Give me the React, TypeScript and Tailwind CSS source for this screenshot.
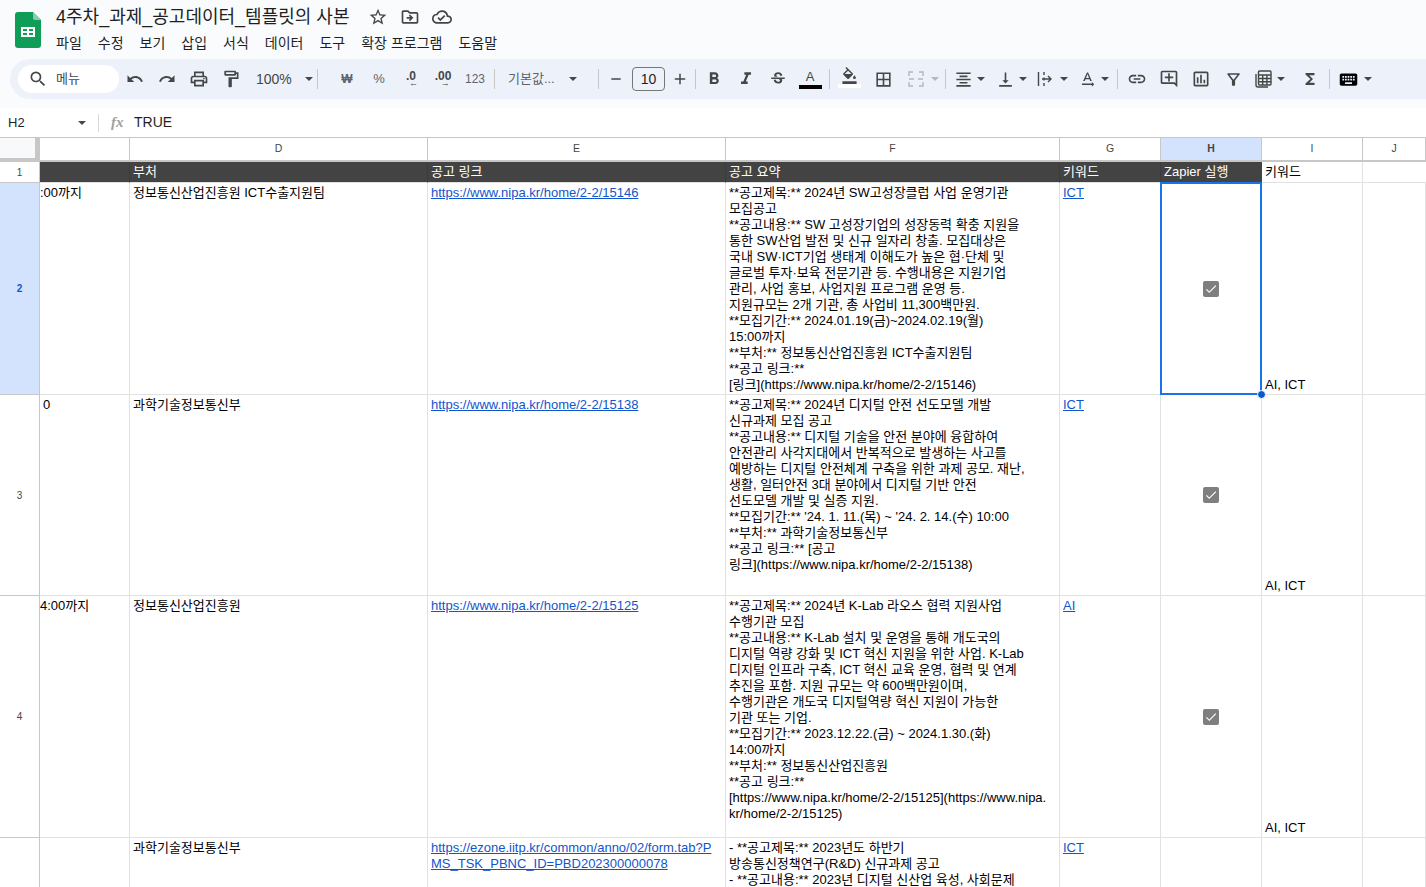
import type { ReactNode } from "react"
import {
  MdSearch, MdUndo, MdRedo, MdOutlinePrint, MdOutlineFormatPaint, MdFormatBold, MdFormatItalic,
  MdStrikethroughS, MdBorderAll, MdFormatAlignCenter, MdVerticalAlignBottom, MdLink,
  MdOutlineAddComment, MdOutlineInsertChart, MdOutlineFilterAlt, MdFunctions, MdKeyboard,
  MdStarBorder, MdOutlineDriveFileMove, MdOutlineCloudDone, MdAdd, MdRemove, MdOutlineFormatColorFill,
  MdTextRotationNone, MdCheck,
} from "react-icons/md"

const font = "font-['Liberation_Sans','Noto_Sans_CJK_KR',sans-serif]"

function Caret({ className = "" }: { className?: string }) {
  return <span className={"block w-0 h-0 border-x-[4px] border-x-transparent border-t-[4px] border-t-[#444746] " + className} />
}

function Tool({ children, w = "w-[32px]" }: { children: ReactNode; w?: string }) {
  return <div className={"flex items-center justify-center h-[28px] shrink-0 text-[#444746] " + w}>{children}</div>
}

function Sep({ m = "mx-[4px]" }: { m?: string }) {
  return <div className={"w-px h-[20px] bg-[#c7c7c7] shrink-0 " + m} />
}

function SheetsLogo() {
  return (
    <svg width="26" height="36" viewBox="0 0 26 36">
      <path d="M3 0h15l8 8v25a3 3 0 0 1-3 3H3a3 3 0 0 1-3-3V3a3 3 0 0 1 3-3z" fill="#0f9d58" />
      <path d="M18 0l8 8h-6a2 2 0 0 1-2-2z" fill="#87ceac" />
      <path d="M6 15h14v10H6z" fill="#fff" />
      <path d="M8 17h4v2H8zM14 17h4v2h-4zM8 21h4v2H8zM14 21h4v2h-4z" fill="#0f9d58" />
    </svg>
  )
}

function TopBar() {
  const menu = ["파일", "수정", "보기", "삽입", "서식", "데이터", "도구", "확장 프로그램", "도움말"]
  return (
    <div className="flex h-[59px] bg-[#f9fbfd]">
      <div className="w-[56px] shrink-0 pl-[15px] pt-[12px]">
        <SheetsLogo />
      </div>
      <div className="pt-[4px]">
        <div className="flex items-center h-[26px]">
          <span className="text-[18px] leading-[24px] text-[#1f1f1f]">4주차_과제_공고데이터_템플릿의 사본</span>
          <div className="flex items-center gap-[12px] ml-[19px] text-[#444746]">
            <MdStarBorder size={20} />
            <MdOutlineDriveFileMove size={20} />
            <MdOutlineCloudDone size={20} />
          </div>
        </div>
        <div className="flex gap-[16px] mt-[3px] text-[14px] leading-[20px] text-[#1f1f1f]">
          {menu.map((m) => (
            <span key={m} className="whitespace-nowrap">{m}</span>
          ))}
        </div>
      </div>
    </div>
  )
}

function Toolbar() {
  return (
    <div className="bg-[#f9fbfd] h-[49px] pl-[10px]">
      <div className="flex items-center h-[40px] pl-[8px] bg-[#edf2fa] rounded-l-[20px] text-[#444746] overflow-hidden">
        <div className="flex items-center w-[101px] h-[28px] shrink-0 rounded-full bg-white pl-[10px] text-[#444746]">
          <MdSearch size={20} />
          <span className="ml-[8px] text-[13px]">메뉴</span>
        </div>
        <Tool><MdUndo size={18} /></Tool>
        <Tool><MdRedo size={18} /></Tool>
        <Tool><MdOutlinePrint size={20} /></Tool>
        <Tool><MdOutlineFormatPaint size={20} /></Tool>
        <div className="flex items-center w-[70px] shrink-0 pl-[9px] text-[14px] text-[#444746]">
          100%<Caret className="ml-[13px]" />
        </div>
        <Sep m="ml-0 mr-[13px]" />
        <Tool><span className="text-[12px] font-bold text-[#5f6368]">₩</span></Tool>
        <Tool><span className="text-[13px] text-[#5f6368]">%</span></Tool>
        <Tool>
          <span className="relative text-[12px] font-bold leading-none pb-[6px]">.0<span className="absolute left-[3px] top-[9px] text-[9px]">←</span></span>
        </Tool>
        <Tool>
          <span className="relative text-[12px] font-bold leading-none pb-[6px]">.00<span className="absolute left-[6px] top-[9px] text-[9px]">→</span></span>
        </Tool>
        <Tool><span className="text-[12px] text-[#5f6368]">123</span></Tool>
        <Sep m="ml-[3px] mr-[13px]" />
        <div className="flex items-center w-[90px] shrink-0 text-[13px] text-[#5f6368]">
          기본값...<Caret className="ml-[14px]" />
        </div>
        <Sep m="ml-0 mr-[1px]" />
        <Tool><MdRemove size={16} /></Tool>
        <div className="flex items-center justify-center w-[33px] h-[24px] shrink-0 border border-[#747775] rounded-[4px] text-[14px] text-[#1f1f1f]">10</div>
        <Tool w="w-[30px]"><MdAdd size={18} /></Tool>
        <Sep m="ml-0 mr-[2px]" />
        <Tool><MdFormatBold size={20} /></Tool>
        <Tool><MdFormatItalic size={20} /></Tool>
        <Tool><MdStrikethroughS size={18} /></Tool>
        <Tool>
          <div className="flex flex-col items-center">
            <span className="text-[13px] leading-[13px] text-[#444746]">A</span>
            <span className="block w-[23px] h-[4px] mt-[2px] bg-black" />
          </div>
        </Tool>
        <Sep m="mx-[3px]" />
        <Tool>
          <div className="flex flex-col items-center -mt-[3px]">
            <MdOutlineFormatColorFill size={17} />
            <span className="block w-[23px] h-[4px] bg-white" />
          </div>
        </Tool>
        <Tool w="w-[36px]"><MdBorderAll size={19} /></Tool>
        <Tool w="w-[30px]">
          <svg width="16" height="16" viewBox="0 0 16 16" fill="none" stroke="#b4b7bb" strokeWidth="1.4">
            <path d="M1 5V1h4M1 11v4h4M15 5V1h-4M15 11v4h-4M1 8h5M15 8h-5" />
          </svg>
        </Tool>
        <Caret className="border-t-[#b4b7bb] ml-0 mr-[5px]" />
        <Sep m="ml-[1px] mr-[3px]" />
        <Tool w="w-[28px]"><MdFormatAlignCenter size={19} /></Tool>
        <Caret className="mr-[8px]" />
        <Tool w="w-[24px]"><MdVerticalAlignBottom size={19} /></Tool>
        <Caret className="ml-[2px] mr-[6px]" />
        <Tool w="w-[24px]">
          <svg width="16" height="16" viewBox="0 0 16 16" fill="none" stroke="#444746" strokeWidth="1.4">
            <path d="M1.5 1v14M7 1v3M7 6.5v3M7 12v3M5 8h8.5M11 5l3 3-3 3" />
          </svg>
        </Tool>
        <Caret className="ml-[3px] mr-[7px]" />
        <Tool w="w-[24px]"><MdTextRotationNone size={19} /></Tool>
        <Caret className="ml-[2px] mr-[8px]" />
        <Sep m="ml-0 mr-[3px]" />
        <Tool><MdLink size={20} /></Tool>
        <Tool><MdOutlineAddComment size={20} /></Tool>
        <Tool><MdOutlineInsertChart size={20} /></Tool>
        <Tool><MdOutlineFilterAlt size={19} /></Tool>
        <Tool w="w-[28px]">
          <svg width="18" height="18" viewBox="0 0 18 18" fill="none" stroke="#444746" strokeWidth="1.4">
            <path d="M2 4v11a2 2 0 0 0 2 2h10" />
            <rect x="4.5" y="1" width="12.5" height="14" rx="1" />
            <path d="M4.5 5h12.5M4.5 8.5h12.5M4.5 11.8h12.5M8.7 5v10M12.9 5v10" />
          </svg>
        </Tool>
        <Caret className="mr-[9px]" />
        <Tool w="w-[32px]"><MdFunctions size={18} /></Tool>
        <Sep m="ml-[3px] mr-[5px]" />
        <Tool w="w-[26px]"><MdKeyboard size={21} className="text-black" /></Tool>
        <Caret className="ml-[3px]" />
      </div>
    </div>
  )
}

function FormulaBar() {
  return (
    <div className="flex items-center h-[29px] bg-white text-[13.5px] text-[#1f1f1f]">
      <span className="w-[78px] pl-[8px] text-[13px] shrink-0">H2</span>
      <Caret className="shrink-0" />
      <div className="w-px h-[18px] bg-[#d9d9d9] ml-[12px] shrink-0" />
      <span className="w-[31px] ml-[12px] italic font-['Liberation_Serif',serif] font-bold text-[15px] text-[#a0a0a0] shrink-0">fx</span>
      <span className="text-[14px] -ml-[8px]">TRUE</span>
    </div>
  )
}

function Lines({ lines }: { lines: string[] }) {
  return (
    <>
      {lines.map((l, i) => (
        <div key={i} className="whitespace-nowrap">{l}</div>
      ))}
    </>
  )
}

function Cell({ children, bottom, className = "" }: { children?: ReactNode; bottom?: boolean; className?: string }) {
  return (
    <div className={"relative border-r border-b border-[#e1e1e1] px-[3px] overflow-hidden text-[13px] leading-[16px] text-black " + (bottom ? "flex flex-col justify-end pb-[1px] " : "pt-[2px] ") + className}>
      {children}
    </div>
  )
}

function A({ children }: { children: ReactNode }) {
  return <span className="text-[#1155cc] underline">{children}</span>
}

function Check() {
  return (
    <div className="absolute inset-0 flex items-center justify-center">
      <div className="flex items-center justify-center w-[16px] h-[16px] rounded-[2px] bg-[#7f7f7f]">
        <MdCheck size={14} className="text-white" />
      </div>
    </div>
  )
}

function ColHead({ children, active }: { children?: ReactNode; active?: boolean }) {
  return (
    <div className={"flex items-center justify-center border-r border-b-[2px] border-[#c7c7c7] text-[10.5px] text-[#444746] " + (active ? "bg-[#d3e3fd] font-bold text-[#0b57d0]" : "bg-white")}>
      {children}
    </div>
  )
}

function RowHead({ n, active }: { n: number; active?: boolean }) {
  return (
    <div className={"flex items-center justify-center border-r border-b border-[#c7c7c7] text-[10px] " + (active ? "bg-[#d3e3fd] font-bold text-[#0b57d0]" : "bg-white text-[#444746]")}>
      {n}
    </div>
  )
}

function Dark({ children, last }: { children?: ReactNode; last?: boolean }) {
  return (
    <div className={"flex items-center px-[3px] bg-[#434343] border-b border-[#e1e1e1] text-[13px] text-white whitespace-nowrap " + (last ? "" : "border-r border-r-[#3c3c3c]")}>
      {children}
    </div>
  )
}

const f2 = [
  "**공고제목:** 2024년 SW고성장클럽 사업 운영기관",
  "모집공고",
  "**공고내용:** SW 고성장기업의 성장동력 확충 지원을",
  "통한 SW산업 발전 및 신규 일자리 창출. 모집대상은",
  "국내 SW·ICT기업 생태계 이해도가 높은 협·단체 및",
  "글로벌 투자·보육 전문기관 등. 수행내용은 지원기업",
  "관리, 사업 홍보, 사업지원 프로그램 운영 등.",
  "지원규모는 2개 기관, 총 사업비 11,300백만원.",
  "**모집기간:** 2024.01.19(금)~2024.02.19(월)",
  "15:00까지",
  "**부처:** 정보통신산업진흥원 ICT수출지원팀",
  "**공고 링크:**",
  "[링크](https://www.nipa.kr/home/2-2/15146)",
]
const f3 = [
  "**공고제목:** 2024년 디지털 안전 선도모델 개발",
  "신규과제 모집 공고",
  "**공고내용:** 디지털 기술을 안전 분야에 융합하여",
  "안전관리 사각지대에서 반복적으로 발생하는 사고를",
  "예방하는 디지털 안전체계 구축을 위한 과제 공모. 재난,",
  "생활, 일터안전 3대 분야에서 디지털 기반 안전",
  "선도모델 개발 및 실증 지원.",
  "**모집기간:** '24. 1. 11.(목) ~ '24. 2. 14.(수) 10:00",
  "**부처:** 과학기술정보통신부",
  "**공고 링크:** [공고",
  "링크](https://www.nipa.kr/home/2-2/15138)",
]
const f4 = [
  "**공고제목:** 2024년 K-Lab 라오스 협력 지원사업",
  "수행기관 모집",
  "**공고내용:** K-Lab 설치 및 운영을 통해 개도국의",
  "디지털 역량 강화 및 ICT 혁신 지원을 위한 사업. K-Lab",
  "디지털 인프라 구축, ICT 혁신 교육 운영, 협력 및 연계",
  "추진을 포함. 지원 규모는 약 600백만원이며,",
  "수행기관은 개도국 디지털역량 혁신 지원이 가능한",
  "기관 또는 기업.",
  "**모집기간:** 2023.12.22.(금) ~ 2024.1.30.(화)",
  "14:00까지",
  "**부처:** 정보통신산업진흥원",
  "**공고 링크:**",
  "[https://www.nipa.kr/home/2-2/15125](https://www.nipa.",
  "kr/home/2-2/15125)",
]
const f5 = [
  "- **공고제목:** 2023년도 하반기",
  "방송통신정책연구(R&D) 신규과제 공고",
  "- **공고내용:** 2023년 디지털 신산업 육성, 사회문제",
]

function Sheet() {
  return (
    <div className="grid grid-cols-[40px_90px_298px_298px_334px_101px_101px_101px_63px] grid-rows-[24px_21px_212px_201px_242px_60px] border-t border-[#c7c7c7]">
      {/* column letters */}
      <div className="bg-[#f8f9fa] border-r-[5px] border-b-[4px] border-[#c7c7c7]" />
      <ColHead />
      <ColHead>D</ColHead>
      <ColHead>E</ColHead>
      <ColHead>F</ColHead>
      <ColHead>G</ColHead>
      <ColHead active>H</ColHead>
      <ColHead>I</ColHead>
      <ColHead>J</ColHead>

      {/* header row */}
      <RowHead n={1} />
      <Dark />
      <Dark>부처</Dark>
      <Dark>공고 링크</Dark>
      <Dark>공고 요약</Dark>
      <Dark>키워드</Dark>
      <Dark last>Zapier 실행</Dark>
      <div className="flex items-center px-[3px] border-r border-b border-[#e1e1e1] text-[13px] text-black">키워드</div>
      <div className="border-b border-[#e1e1e1]" />

      {/* row 2 */}
      <RowHead n={2} active />
      <Cell className="!px-0">:00까지</Cell>
      <Cell>정보통신산업진흥원 ICT수출지원팀</Cell>
      <Cell><A>https://www.nipa.kr/home/2-2/15146</A></Cell>
      <Cell><Lines lines={f2} /></Cell>
      <Cell><A>ICT</A></Cell>
      <div className="relative border-r border-b border-[#e1e1e1]">
        <Check />
        <div className="absolute -left-px -top-px -right-px -bottom-px border-2 border-[#1a73e8] pointer-events-none" />
        <div className="absolute -right-[5px] -bottom-[5px] z-10 w-[9px] h-[9px] rounded-full bg-[#0b57d0] border border-white" />
      </div>
      <Cell bottom>AI, ICT</Cell>
      <Cell />

      {/* row 3 */}
      <RowHead n={3} />
      <Cell>0</Cell>
      <Cell>과학기술정보통신부</Cell>
      <Cell><A>https://www.nipa.kr/home/2-2/15138</A></Cell>
      <Cell><Lines lines={f3} /></Cell>
      <Cell><A>ICT</A></Cell>
      <div className="relative border-r border-b border-[#e1e1e1]"><Check /></div>
      <Cell bottom>AI, ICT</Cell>
      <Cell />

      {/* row 4 */}
      <RowHead n={4} />
      <Cell className="!px-0">4:00까지</Cell>
      <Cell>정보통신산업진흥원</Cell>
      <Cell><A>https://www.nipa.kr/home/2-2/15125</A></Cell>
      <Cell><Lines lines={f4} /></Cell>
      <Cell><A>AI</A></Cell>
      <div className="relative border-r border-b border-[#e1e1e1]"><Check /></div>
      <Cell bottom>AI, ICT</Cell>
      <Cell />

      {/* row 5 */}
      <div className="border-r border-[#c7c7c7] bg-white" />
      <Cell />
      <Cell>과학기술정보통신부</Cell>
      <Cell>
        <div><A>https://ezone.iitp.kr/common/anno/02/form.tab?P</A></div>
        <div><A>MS_TSK_PBNC_ID=PBD202300000078</A></div>
      </Cell>
      <Cell><Lines lines={f5} /></Cell>
      <Cell><A>ICT</A></Cell>
      <Cell />
      <Cell />
      <Cell />
    </div>
  )
}

export default function App() {
  return (
    <div className={"w-[1426px] h-[887px] overflow-hidden bg-white " + font}>
      <TopBar />
      <Toolbar />
      <FormulaBar />
      <Sheet />
    </div>
  )
}
